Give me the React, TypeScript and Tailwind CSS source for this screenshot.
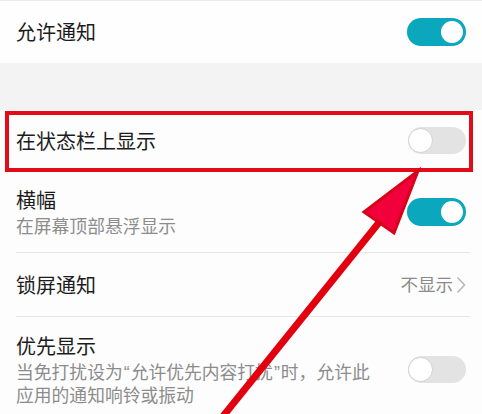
import React from 'react';

const Toggle: React.FC<{ on?: boolean }> = ({ on }) => {
  if (on) {
    return (
      <div className="flex h-[28px] w-[59px] shrink-0 items-center justify-end rounded-full bg-[#0aa7bd] pr-[3px]">
        <div className="h-[22px] w-[22px] rounded-full bg-white" />
      </div>
    );
  }
  return (
    <div className="flex h-[27px] w-[58px] shrink-0 items-center rounded-full bg-[#e3e3e3]">
      <div className="h-[25px] w-[25px] rounded-full border border-[#d2d2d2] bg-white" />
    </div>
  );
};

const Arrow: React.FC = () => (
  <svg className="pointer-events-none absolute inset-0" width="482" height="414" viewBox="0 0 482 414">
    <line x1="381" y1="220" x2="220" y2="420" stroke="#e2000f" strokeWidth="7" />
    <polygon points="418,171 364,212 394,233" fill="#f2003c" stroke="#d9001a" strokeWidth="3" strokeLinejoin="miter" />
  </svg>
);

// narrow latin quotes like the reference
const Q: React.FC<{ children: React.ReactNode }> = ({ children }) => (
  <span className="mx-[1px]" style={{ fontFamily: '"Liberation Sans", sans-serif' }}>
    {children}
  </span>
);

const App: React.FC = () => {
  return (
    <div
      className="relative h-[414px] w-[482px] overflow-hidden bg-[#fdfdfd] text-[#1c1c1c]"
      style={{ fontFamily: '"Noto Sans CJK SC", "Noto Sans", sans-serif' }}
    >
      <div className="flex h-[63px] items-center justify-between border-t border-[#ececec] bg-[#fefefe] pl-4 pr-4">
        <span className="text-[20px] leading-[26px]">允许通知</span>
        <Toggle on />
      </div>

      <div className="h-[47px] bg-[#f3f3f3]" />

      <div className="relative flex h-[61px] items-center justify-between pl-4 pr-4">
        <span className="text-[20px] leading-[26px]">在状态栏上显示</span>
        <Toggle />
        <div className="absolute left-[5px] top-[1px] h-[61px] w-[468px] border-4 border-[#e30b17]" />
      </div>

      <div className="ml-4 mr-3 flex items-center justify-between border-b border-[#e6e6e6] pb-[16px] pr-1 pt-[16px]">
        <div>
          <div className="text-[20px] leading-[26px]">横幅</div>
          <div className="mt-[2px] text-[17.8px] leading-[21px] text-[#8c8c8c]">在屏幕顶部悬浮显示</div>
        </div>
        <Toggle on />
      </div>

      <div className="ml-4 mr-3 flex h-[64px] items-center justify-between border-b border-[#e6e6e6] pr-1">
        <span className="text-[20px] leading-[26px]">锁屏通知</span>
        <div className="flex items-center gap-[3px] text-[17.5px] text-[#8a8a8a]">
          <span>不显示</span>
          <svg width="10" height="18" viewBox="0 0 10 18">
            <path d="M1.5 1.5 L8.5 9 L1.5 16.5" fill="none" stroke="#b8b8b8" strokeWidth="1.6" />
          </svg>
        </div>
      </div>

      <div className="ml-4 mr-3 flex items-center justify-between pr-1 pt-[16px]">
        <div>
          <div className="text-[20px] leading-[26px]">优先显示</div>
          <div className="mt-[2px] text-[17.8px] leading-[21px] text-[#8c8c8c]">
            <div>
              当免打扰设为<Q>“</Q>允许优先内容打扰<Q>”</Q>时，允许此
            </div>
            <div>应用的通知响铃或振动</div>
          </div>
        </div>
        <Toggle />
      </div>

      <Arrow />
    </div>
  );
};

export default App;
